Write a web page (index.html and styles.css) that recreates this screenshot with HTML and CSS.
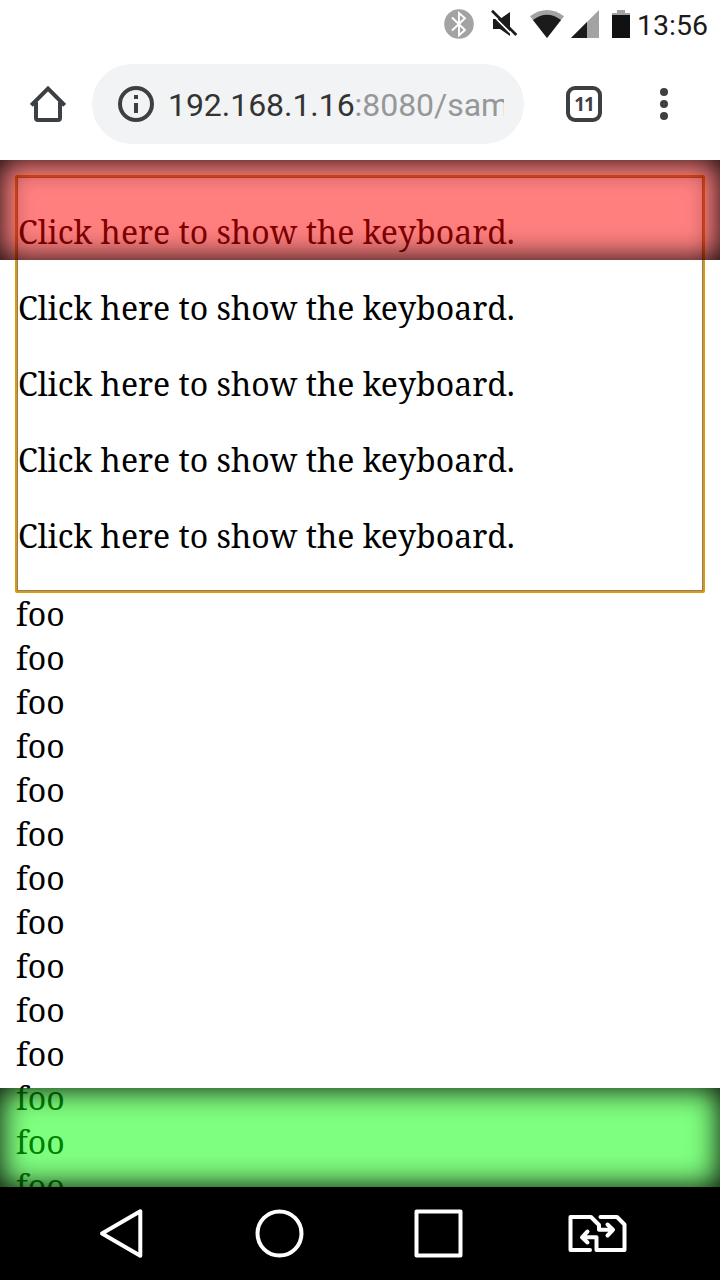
FILE: index.html
```html
<!DOCTYPE html>
<html lang="en">
<head>
<meta charset="utf-8">
<title>Keyboard sample</title>
<link rel="stylesheet" href="styles.css">
</head>
<body>
<header class="status">
  <svg class="status-icons" width="200" height="50" viewBox="430 0 200 50">
    <circle cx="459" cy="24" r="14.8" fill="#a3a3a3"/>
    <path d="M452 17.500L465 30L459 35.300V13L465 18.300L452 30.500" fill="none" stroke="#fff" stroke-width="1.900"/>
    <path d="M493 19H500L510 12V36L500 29H493Z" fill="#1b1b1b"/>
    <path d="M489.500 12L514.500 37" stroke="#fff" stroke-width="1.600"/>
    <path d="M492 10.700L516.300 35" stroke="#1b1b1b" stroke-width="2.700"/>
    <path d="M530 16.200Q547 4 564 16.200L547 38Z" fill="#a3a3a3"/>
    <path d="M533 20Q547 9.500 561 20L547 38Z" fill="#1b1b1b"/>
    <path d="M599 10V38H571Z" fill="#a3a3a3"/>
    <path d="M587 22V38H571Z" fill="#1b1b1b"/>
    <path d="M617 10H625V13H630V16H612V13H617Z" fill="#a3a3a3"/>
    <path d="M612 15H630V38H612Z" fill="#111"/>
  </svg>
  <span class="clock">13:56</span>
</header>
<nav class="toolbar">
  <svg class="home" width="36" height="36" viewBox="0 0 36 36" fill="none" stroke="#3c4043" stroke-width="4">
    <path d="M1.300 19.300L18 2.600L34.700 19.300"/><path d="M6 16V32Q6 34 8 34H28Q30 34 30 32V16"/>
  </svg>
  <div class="address">
    <svg width="36" height="36" viewBox="0 0 36 36">
      <circle cx="18" cy="18" r="16" fill="none" stroke="#3c4043" stroke-width="4"/>
      <path d="M16 9H20V13H16ZM16 17H20V27H16Z" fill="#3c4043"/>
    </svg>
    <div class="url">192.168.1.16<span class="path">:8080/sam</span></div>
  </div>
  <div class="tabs">11</div>
  <svg class="menu" width="8" height="32" viewBox="0 0 8 32" fill="#3c4043">
    <circle cx="4" cy="4" r="4"/><circle cx="4" cy="16" r="4"/><circle cx="4" cy="28" r="4"/>
  </svg>
</nav>
<main class="page">
  <div class="editor">
    <p>Click here to show the keyboard.</p>
    <p>Click here to show the keyboard.</p>
    <p>Click here to show the keyboard.</p>
    <p>Click here to show the keyboard.</p>
    <p>Click here to show the keyboard.</p>
  </div>
  <div class="foo">foo</div><div class="foo">foo</div><div class="foo">foo</div><div class="foo">foo</div><div class="foo">foo</div><div class="foo">foo</div><div class="foo">foo</div>
  <div class="foo">foo</div><div class="foo">foo</div><div class="foo">foo</div><div class="foo">foo</div><div class="foo">foo</div><div class="foo">foo</div><div class="foo">foo</div>
  <div class="band band-top"></div>
  <div class="band band-bottom"></div>
</main>
<footer class="navbar">
  <svg width="720" height="93" viewBox="0 1187 720 93" fill="none" stroke="#fff" stroke-width="4" stroke-linejoin="round" stroke-linecap="round">
    <path d="M140.300 1211.300V1255.700L102 1233.500Z"/>
    <circle cx="279.500" cy="1233.500" r="22"/>
    <path d="M416.500 1211.500H460.500V1255.500H416.500Z"/>
    <path d="M590 1250H570.500V1217H591L599 1225V1229.800H613M607.500 1224.500L613 1229.800L607.500 1235.500M600.500 1217H617L624.500 1224.500V1250H596.500V1237.300H582.500M587.500 1231.500L582 1237.300L587.500 1242.500"/>
  </svg>
</footer>
</body>
</html>
```
FILE: styles.css
```css
* { box-sizing: border-box; }
body {
  margin: 0;
  width: 720px;
  height: 1280px;
  overflow: hidden;
  display: flex;
  flex-direction: column;
  background: #fff;
  font-family: Roboto, sans-serif;
}
svg { display: block; flex: none; }
.status { height: 50px; display: flex; padding-left: 430px; }
.clock {
  margin-left: 7px;
  font-size: 28.5px;
  line-height: 51px;
  color: #1b1b1b;
  white-space: nowrap;
}
.toolbar {
  height: 110px;
  padding: 14px 0 16px 30px;
  display: flex;
  align-items: center;
}
.address {
  width: 432px;
  height: 80px;
  margin-left: 26px;
  padding: 0 20px 0 26px;
  border-radius: 40px;
  background: #f1f3f4;
  display: flex;
  align-items: center;
  gap: 14px;
}
.url {
  flex: 1;
  min-width: 0;
  padding-top: 2px;
  overflow: hidden;
  white-space: nowrap;
  font-size: 32px;
  line-height: 44px;
  letter-spacing: -0.05px;
  color: #333;
}
.path { color: #969798; }
.tabs {
  width: 36px;
  height: 36px;
  margin-left: 42px;
  border: 4px solid #3c4043;
  border-radius: 9px;
  font-family: "Open Sans", "Noto Sans", sans-serif;
  font-size: 19px;
  font-weight: 700;
  line-height: 28px;
  letter-spacing: -1px;
  text-align: center;
  color: #3c4043;
}
.menu { margin-left: 58px; }
.page {
  position: relative;
  height: 1027px;
  padding: 16px;
  overflow: hidden;
  font-family: "Noto Serif", "DejaVu Serif Condensed", "DejaVu Serif", serif;
  font-size: 32px;
  line-height: 44px;
  color: #000;
}
.editor {
  height: 416px;
  border: 2px solid #808080;
  border-radius: 1px;
  outline: 2px solid #e59700;
  outline-offset: -1px;
  white-space: nowrap;
}
.editor p { margin: 32px 0; }
.foo { height: 44px; }
.band {
  position: absolute;
  left: 0;
  right: 0;
  box-shadow: inset 0 0 30px #000;
}
.band-top { top: 0; height: 100px; background: rgba(255, 0, 0, 0.5); }
.band-bottom { bottom: 0; height: 99px; background: rgba(0, 255, 0, 0.5); }
.navbar { height: 93px; background: #000; }
```
